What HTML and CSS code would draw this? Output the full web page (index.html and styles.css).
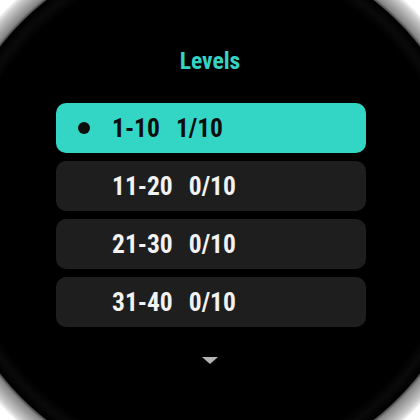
FILE: index.html
```html
<!DOCTYPE html>
<html>
<head>
<meta charset="utf-8">
<link rel="stylesheet" href="styles.css">
</head>
<body>
<div class="watch">
  <div class="screen">
    <div class="title">Levels</div>
    <div class="list">
      <div class="row active"><span class="dot"></span><span class="range">1-10</span><span class="score">1/10</span></div>
      <div class="row"><span class="dot"></span><span class="range">11-20</span><span class="score">0/10</span></div>
      <div class="row"><span class="dot"></span><span class="range">21-30</span><span class="score">0/10</span></div>
      <div class="row"><span class="dot"></span><span class="range">31-40</span><span class="score">0/10</span></div>
    </div>
    <div class="arrow"></div>
  </div>
</div>
</body>
</html>
```
FILE: styles.css
```css
html, body {
  margin: 0;
  padding: 0;
  background: #fff;
}
.watch {
  width: 420px;
  height: 420px;
  overflow: hidden;
  background: radial-gradient(circle at 210px 210px,
    #000 0, #000 246px, #0a0a0a 256px, #000 265.5px,
    #4a4a4a 266.5px, #858585 269px, #a6a6a6 275px, #c8c8c8 281px, #e6e6e6 284.5px, #fff 286.5px, #fff 400px);
}
.screen {
  width: 420px;
  height: 420px;
  display: flex;
  flex-direction: column;
  align-items: center;
  font-family: Roboto, "Liberation Sans", sans-serif;
  font-stretch: 85%;
}
.title {
  margin-top: 47px;
  height: 28px;
  line-height: 28px;
  font-size: 23.5px;
  font-weight: 700;
  color: #35d3c2;
}
.list {
  margin-top: 28px;
  width: 310px;
  margin-left: 2px;
  display: flex;
  flex-direction: column;
  gap: 8px;
}
.row {
  height: 50px;
  border-radius: 10px;
  background: #1e1e1e;
  display: flex;
  align-items: center;
  padding-left: 22px;
  color: #f2f2f2;
  font-size: 25.5px;
  font-weight: 700;
}
.row.active {
  background: #33d6c5;
  color: #0d0d0d;
}
.dot {
  width: 12px;
  height: 12px;
  border-radius: 50%;
  margin-right: 22px;
  flex: none;
}
.active .dot {
  background: #0d0d0d;
}
.range {
  margin-right: 16px;
}
.arrow {
  margin-top: 30px;
  width: 0;
  height: 0;
  border-left: 8.5px solid transparent;
  border-right: 8.5px solid transparent;
  border-top: 7px solid #b4b4b4;
}
```
